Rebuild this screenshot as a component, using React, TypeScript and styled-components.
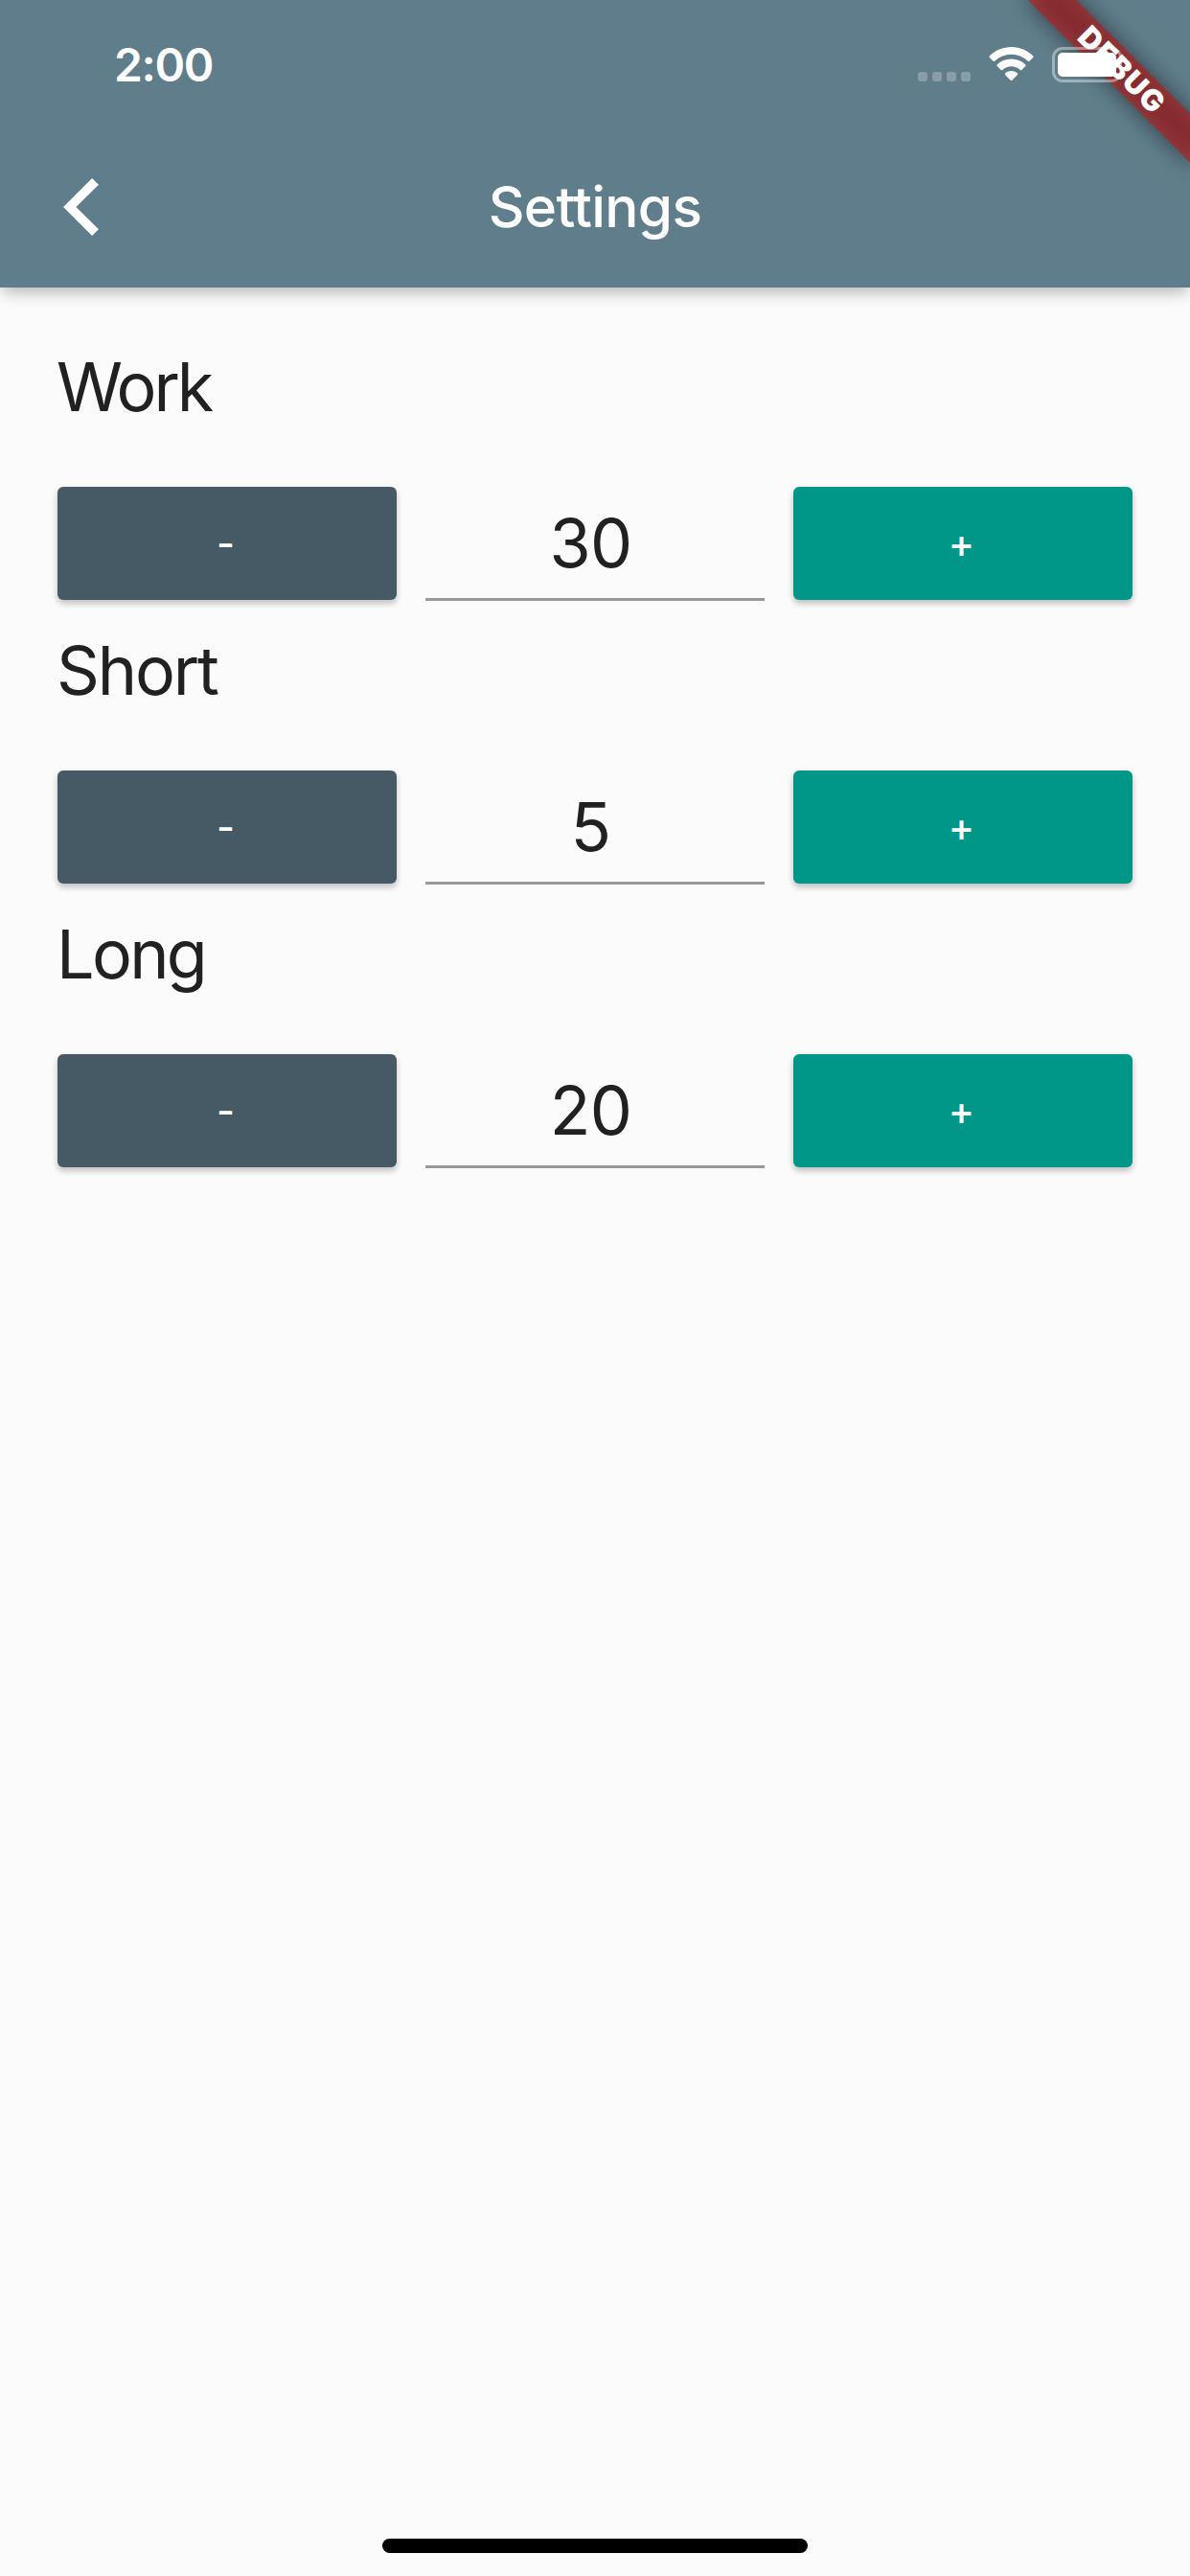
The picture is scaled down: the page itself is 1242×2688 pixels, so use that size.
import React from "react";
import styled, { createGlobalStyle } from "styled-components";

const GlobalStyle = createGlobalStyle`
  * { box-sizing: border-box; }
  html, body { margin: 0; padding: 0; background: #fbfbfb; }
  body { font-family: Inter, "Liberation Sans", sans-serif; color: #212121; }
`;

const Screen = styled.div`
  position: relative;
  display: flex;
  flex-direction: column;
  width: 1242px;
  height: 2688px;
  overflow: hidden;
  background: #fbfbfb;
`;

const Header = styled.header`
  display: flex;
  flex-direction: column;
  height: 300px;
  background: #607d8b;
  color: #fff;
  box-shadow: 0 8px 14px -3px rgba(0, 0, 0, 0.22), 0 6px 18px rgba(0, 0, 0, 0.06);
`;

const StatusBar = styled.div`
  position: relative;
  z-index: 2;
  display: flex;
  justify-content: space-between;
  height: 132px;
  padding: 0 62px 0 119px;
`;

const Clock = styled.time`
  padding-top: 39px;
  font-size: 48px;
  line-height: 58px;
  font-weight: 600;
  letter-spacing: -1.4px;
`;

const StatusIcons = styled.div`
  display: flex;
  align-items: flex-start;
  padding-top: 49px;
`;

const SignalDots = styled.div`
  display: flex;
  gap: 5px;
  padding-top: 26px;
  margin-right: 19px;
`;

const Dot = styled.span`
  width: 10px;
  height: 10px;
  border-radius: 3px;
  background: rgba(255, 255, 255, 0.25);
`;

const WifiIcon = styled.svg`
  width: 47px;
  height: 37px;
  margin-right: 19px;
`;

const BatteryIcon = styled.svg`
  width: 82px;
  height: 37px;
`;

const NavBar = styled.nav`
  display: grid;
  grid-template-columns: 1fr auto 1fr;
  align-items: center;
  height: 168px;
  padding: 0 66px;
`;

const BackButton = styled.button`
  display: flex;
  justify-self: start;
  padding: 0;
  border: 0;
  background: none;
  color: #fff;
`;

const Title = styled.h1`
  margin: 0;
  font-size: 58.5px;
  line-height: 72px;
  font-weight: 500;
  letter-spacing: -0.7px;
`;

const DebugBanner = styled.div`
  position: absolute;
  top: 54px;
  right: -48px;
  width: 240px;
  height: 36px;
  transform: rotate(45deg);
`;

const BannerShadow = styled.div`
  position: absolute;
  inset: 0;
  background: rgba(0, 0, 0, 0.5);
  filter: blur(11.9px);
`;

const BannerLabel = styled.div`
  position: relative;
  height: 36px;
  padding-left: 3px;
  background: rgba(183, 28, 28, 0.627);
  color: #fff;
  font-size: 31px;
  line-height: 36px;
  font-weight: 900;
  letter-spacing: 1.2px;
  text-align: center;
`;

const Content = styled.main`
  flex: 1;
  padding: 60px 60px 0;
`;

const Setting = styled.section`
  display: flex;
  flex-direction: column;
  height: 296px;
`;

const SettingName = styled.h2<{ $tracking: number }>`
  margin: 0 0 0 -1px;
  height: 148px;
  font-size: 70px;
  line-height: 88px;
  font-weight: 400;
  letter-spacing: ${(p) => p.$tracking}px;
`;

const Controls = styled.div`
  display: grid;
  grid-template-columns: repeat(3, 354px);
  gap: 30px;
`;

const StepButton = styled.button<{ $color: string }>`
  height: 118px;
  padding: 0 3px 0 0;
  border: 0;
  border-radius: 6px;
  background: ${(p) => p.$color};
  color: #fff;
  font: 500 41px/118px Inter, "Liberation Sans", sans-serif;
  box-shadow: 0 4px 6px rgba(0, 0, 0, 0.2), 0 2px 9px rgba(0, 0, 0, 0.06);
`;

const ValueField = styled.input`
  width: 100%;
  height: 119px;
  padding: 0 9px 0 0;
  border: 0;
  border-bottom: 3px solid #999;
  border-radius: 0;
  outline: 0;
  background: transparent;
  color: #212121;
  font: 400 70px/88px Inter, "Liberation Sans", sans-serif;
  letter-spacing: -0.6px;
  text-align: center;
`;

const HomeIndicator = styled.div`
  align-self: center;
  width: 444px;
  height: 15px;
  margin-bottom: 24px;
  border-radius: 8px;
  background: #000;
`;

const settings = [
  { name: "Work", value: 30, tracking: -3 },
  { name: "Short", value: 5, tracking: -2.2 },
  { name: "Long", value: 20, tracking: -2.7 },
];

export default function App() {
  return (
    <>
      <GlobalStyle />
      <Screen>
        <Header>
          <StatusBar>
            <Clock>2:00</Clock>
            <StatusIcons>
              <SignalDots>
                <Dot />
                <Dot />
                <Dot />
                <Dot />
              </SignalDots>
              <WifiIcon viewBox="0 0 48 37" fill="#fff" preserveAspectRatio="none">
                <path d="M24 0C33 0 41 3.500 47.200 9.300Q48 10.200 47.200 11L43.300 14.800Q42.500 15.500 41.700 14.800Q34 7.800 24 7.800T6.300 14.800Q5.500 15.500 4.700 14.800L.8 11Q0 10.200.8 9.300C7 3.500 15 0 24 0Z" />
                <path d="M24 12.500C29.800 12.500 35 14.700 39 18.300Q39.800 19.200 39 20L35.100 23.900Q34.300 24.600 33.400 23.900Q29.300 20.200 24 20.200T14.600 23.900Q13.700 24.600 12.900 23.900L9 20Q8.200 19.200 9 18.300C13 14.700 18.200 12.500 24 12.500Z" />
                <path d="M24 25Q27.600 25 30.500 27.300Q31.300 28.200 30.500 29.100L24.900 34.800Q24 35.600 23.100 34.800L17.500 29.100Q16.700 28.200 17.500 27.300Q20.400 25 24 25Z" />
              </WifiIcon>
              <BatteryIcon viewBox="0 0 82 37">
                <rect x="1.500" y="1.500" width="70" height="34" rx="9.500" fill="none" stroke="#fff" strokeOpacity=".4" strokeWidth="3" />
                <rect x="6" y="6" width="61" height="25" rx="5" fill="#fff" />
              </BatteryIcon>
            </StatusIcons>
          </StatusBar>
          <NavBar>
            <BackButton aria-label="Back">
              <svg width="37" height="60" viewBox="0 2.100 12.200 19.800" fill="currentColor">
                <path d="M12.200 4.300 9.900 2.100 0 12l9.900 9.900 2.300-2.200L4.400 12z" />
              </svg>
            </BackButton>
            <Title>Settings</Title>
          </NavBar>
        </Header>
        <DebugBanner>
          <BannerShadow />
          <BannerLabel>DEBUG</BannerLabel>
        </DebugBanner>
        <Content>
          {settings.map((s) => (
            <Setting key={s.name}>
              <SettingName $tracking={s.tracking}>{s.name}</SettingName>
              <Controls>
                <StepButton $color="#455a64">-</StepButton>
                <ValueField defaultValue={s.value} aria-label={s.name} />
                <StepButton $color="#009688">+</StepButton>
              </Controls>
            </Setting>
          ))}
        </Content>
        <HomeIndicator />
      </Screen>
    </>
  );
}
